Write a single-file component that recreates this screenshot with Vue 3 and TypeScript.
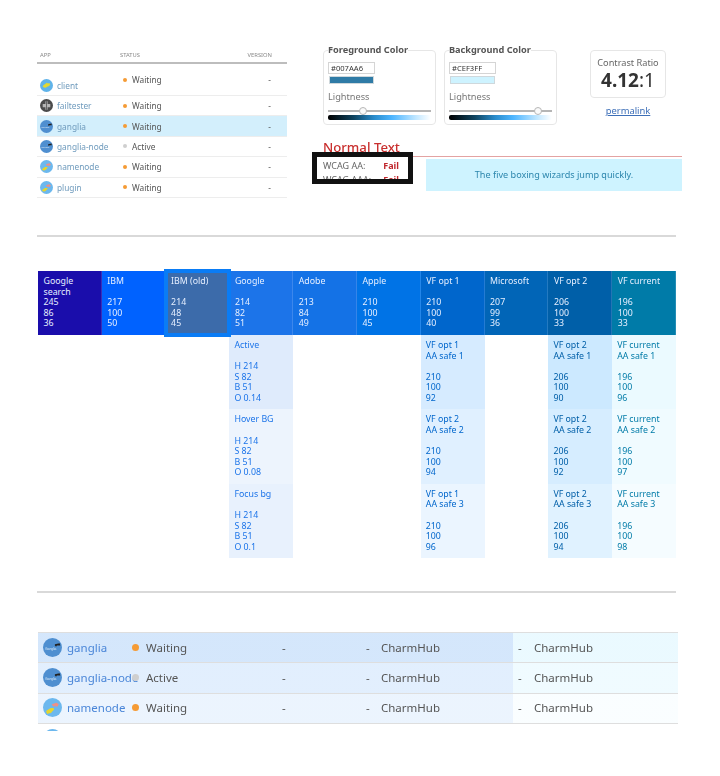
<script setup lang="ts">
type AppRow = { name: string; icon: string; status: string; selected?: boolean }

const apps: AppRow[] = [
  { name: "client", icon: "client", status: "Waiting" },
  { name: "failtester", icon: "fail", status: "Waiting" },
  { name: "ganglia", icon: "ganglia", status: "Waiting", selected: true },
  { name: "ganglia-node", icon: "ganglia", status: "Active" },
  { name: "namenode", icon: "node", status: "Waiting" },
  { name: "plugin", icon: "node", status: "Waiting" },
]

const pickers = [
  { title: "Foreground Color", hex: "#007AA6", swatch: "#2f7ba6", thumb: 34 },
  { title: "Background Color", hex: "#CEF3FF", swatch: "#cef3ff", thumb: 86 },
]

type Shade = { lines: string[]; values: string[]; bg: string }
type Brand = { title: string[]; h: number; s: number; l: number; focus?: boolean; shades?: Shade[] }

function hslShades(names: string[], h: number, lights: number[]): Shade[] {
  return lights.map((l, i) => ({
    lines: [names[i], "AA safe " + (i + 1), ""],
    values: [String(h), "100", String(l)],
    bg: `hsl(${h}, 100%, ${l}%)`,
  }))
}

const googleShades: Shade[] = [
  { lines: ["Active", ""], values: ["H 214", "S 82", "B 51", "O 0.14"], bg: "hsla(214, 82%, 51%, 0.14)" },
  { lines: ["Hover BG", ""], values: ["H 214", "S 82", "B 51", "O 0.08"], bg: "hsla(214, 82%, 51%, 0.08)" },
  { lines: ["Focus bg", ""], values: ["H 214", "S 82", "B 51", "O 0.1"], bg: "hsla(214, 82%, 51%, 0.1)" },
]

const brands: Brand[] = [
  { title: ["Google", "search"], h: 245, s: 86, l: 36 },
  { title: ["IBM"], h: 217, s: 100, l: 50 },
  { title: ["IBM (old)"], h: 214, s: 48, l: 45, focus: true },
  { title: ["Google"], h: 214, s: 82, l: 51, shades: googleShades },
  { title: ["Adobe"], h: 213, s: 84, l: 49 },
  { title: ["Apple"], h: 210, s: 100, l: 45 },
  { title: ["VF opt 1"], h: 210, s: 100, l: 40, shades: hslShades(["VF opt 1", "VF opt 2", "VF opt 1"], 210, [92, 94, 96]) },
  { title: ["Microsoft"], h: 207, s: 99, l: 36 },
  { title: ["VF opt 2"], h: 206, s: 100, l: 33, shades: hslShades(["VF opt 2", "VF opt 2", "VF opt 2"], 206, [90, 92, 94]) },
  { title: ["VF current"], h: 196, s: 100, l: 33, shades: hslShades(["VF current", "VF current", "VF current"], 196, [96, 97, 98]) },
]

function color(b: Brand) {
  return `hsl(${b.h}, ${b.s}%, ${b.l}%)`
}

const deployed = [
  { name: "ganglia", icon: "ganglia", status: "Waiting", left: "hsl(212, 85%, 91%)", right: "hsl(196, 100%, 96%)" },
  { name: "ganglia-node", icon: "ganglia", status: "Active", left: "hsl(212, 90%, 94%)", right: "hsl(196, 100%, 97%)" },
  { name: "namenode", icon: "node", status: "Waiting", left: "hsl(212, 90%, 96%)", right: "hsl(196, 100%, 99%)" },
]
</script>

<template>
  <main class="page">
    <svg class="defs" aria-hidden="true">
      <symbol id="client" viewBox="0 0 24 24">
        <circle cx="12" cy="12" r="12" fill="#5fb3ea" />
        <path d="M5 14c1-4 5-4 7-7 2 2 5 0 7 2-1 3-2 4-5 5-2 1-3 3-5 2-2 0-3-1-4-2z" fill="#e3d832" />
      </symbol>
      <symbol id="fail" viewBox="0 0 24 24">
        <circle cx="12" cy="12" r="12" fill="#4b4b4b" />
        <path d="M10 4h4v5h5v6h-5v5h-4v-5H5V9h5z" fill="#b5b5b5" />
        <path d="M12 4v16" stroke="#4b4b4b" stroke-width="1.4" />
      </symbol>
      <symbol id="ganglia" viewBox="0 0 24 24">
        <circle cx="12" cy="12" r="12" fill="#4f8fd0" />
        <path d="M15 8l6-1.5 1 3-4.5 0-1 1.5-1.5-1.5z" fill="#222" />
      </symbol>
      <symbol id="node" viewBox="0 0 24 24">
        <circle cx="12" cy="12" r="12" fill="#6cb8ee" />
        <path d="M4 18c0-3 3-3 5-5 2 0 5-1 5 1 0 2-2 2-3 4-2 2-6 2-7 0z" fill="#e5d52e" />
        <path d="M11 8l6-2 3 2-2 3-3-1-2 1z" fill="#ee8f86" />
      </symbol>
    </svg>

    <section class="top">
      <div class="apps">
        <div class="apps-head">
          <span class="col-app">APP</span>
          <span class="col-status">STATUS</span>
          <span class="col-version">VERSION</span>
        </div>
        <div
          v-for="(a, i) in apps"
          :key="a.name"
          class="apps-row"
          :class="{ selected: a.selected, first: i === 0 }"
        >
          <span class="col-app app-name">
            <svg class="icon" viewBox="0 0 24 24">
              <use :href="'#' + a.icon" />
              <text v-if="a.icon === 'ganglia'" x="2.5" y="15" class="logo-text">Ganglia</text>
            </svg>
            {{ a.name }}
          </span>
          <span class="col-status status-cell">
            <i class="dot" :class="a.status === 'Active' ? 'grey' : 'orange'"></i>
            {{ a.status }}
          </span>
          <span class="col-version">-</span>
        </div>
      </div>

      <div class="checker">
        <div class="picker-row">
          <div v-for="p in pickers" :key="p.title" class="picker">
            <div class="legend">{{ p.title }}</div>
            <div class="hex">{{ p.hex }}</div>
            <div class="swatch" :style="{ background: p.swatch }"></div>
            <div class="light-label">Lightness</div>
            <div class="slider">
              <span class="thumb" :style="{ left: p.thumb + '%' }"></span>
            </div>
            <div class="ramp"></div>
          </div>
          <div class="ratio-wrap">
            <div class="ratio">
              <div class="ratio-label">Contrast Ratio</div>
              <div class="ratio-value"><b>4.12</b>:1</div>
            </div>
            <a class="permalink" href="#">permalink</a>
          </div>
        </div>

        <div class="normal">
          <h2>Normal Text</h2>
          <div class="normal-body">
            <div class="levels">
              <div class="level">WCAG AA: <b>Fail</b></div>
              <div class="level">WCAG AAA: <b>Fail</b></div>
              <div class="frame"></div>
            </div>
            <div class="preview">The five boxing wizards jump quickly.</div>
          </div>
        </div>
      </div>
    </section>

    <hr class="rule" />

    <section class="colors">
      <div v-for="b in brands" :key="b.title.join()" class="brand">
        <div class="brand-head" :class="{ focus: b.focus }" :style="{ background: color(b) }">
          <div class="title">
            <div v-for="t in b.title" :key="t">{{ t }}</div>
          </div>
          <div>{{ b.h }}</div>
          <div>{{ b.s }}</div>
          <div>{{ b.l }}</div>
        </div>
        <div
          v-for="s in b.shades"
          :key="s.bg"
          class="shade"
          :style="{ background: s.bg, color: color(b) }"
        >
          <div v-for="(t, i) in s.lines" :key="i" class="line">{{ t }}</div>
          <div v-for="v in s.values" :key="v">{{ v }}</div>
        </div>
      </div>
    </section>

    <hr class="rule rule-two" />

    <section class="deployed">
      <div
        v-for="d in deployed"
        :key="d.name"
        class="dep-row"
        :style="{ background: `linear-gradient(90deg, ${d.left} 475px, ${d.right} 475px)` }"
      >
        <svg class="dep-icon" viewBox="0 0 24 24">
          <use :href="'#' + d.icon" />
          <text v-if="d.icon === 'ganglia'" x="2.5" y="15" class="logo-text">Ganglia</text>
        </svg>
        <span class="dep-name">{{ d.name }}</span>
        <i class="dep-dot" :class="d.status === 'Active' ? 'grey' : 'orange'"></i>
        <span>{{ d.status }}</span>
        <span>-</span>
        <span>-</span>
        <span>CharmHub</span>
        <span>-</span>
        <span>CharmHub</span>
      </div>
      <div class="dep-row next">
        <svg class="dep-icon" viewBox="0 0 24 24"><use href="#node" /></svg>
      </div>
    </section>
  </main>
</template>

<style scoped>
.page {
  width: 720px;
  height: 776px;
  overflow: hidden;
  font-family: "Noto Sans", "Open Sans", sans-serif;
  color: #444;
  filter: blur(0.35px);
}

.defs {
  position: absolute;
  width: 0;
  height: 0;
}

.logo-text {
  font-size: 4.2px;
  fill: #dbe9f6;
  font-family: "Liberation Sans", sans-serif;
}

.top {
  display: flex;
  padding: 47px 38px 0 37px;
  height: 235px;
  box-sizing: border-box;
}

.apps {
  width: 250px;
  margin-right: 36px;
  font-size: 8.3px;
}

.apps-head {
  display: flex;
  height: 17px;
  align-items: center;
  border-bottom: 2px solid #bdbdbd;
  box-sizing: border-box;
  font-size: 5.8px;
  color: #888;
}

.col-app {
  width: 83px;
  padding-left: 3px;
  box-sizing: border-box;
}

.col-status {
  width: 125px;
  flex: none;
}

.col-version {
  flex: 1;
  text-align: right;
  padding-right: 16px;
}

.apps-head .col-version {
  padding-right: 15px;
}

.apps-row {
  display: flex;
  align-items: center;
  height: 20.4px;
  border-bottom: 1px solid #ededed;
  box-sizing: border-box;
  color: #555;
}

.apps-row.first {
  height: 32px;
  align-items: flex-end;
  padding-bottom: 3px;
}

.apps-row.first .status-cell,
.apps-row.first .col-version {
  align-self: flex-start;
  padding-top: 10px;
}

.apps-row.selected {
  background: #d3effc;
}

.app-name {
  display: flex;
  align-items: center;
  gap: 4px;
  color: #6f9bbd;
}

.icon {
  width: 13px;
  height: 13px;
  flex: none;
}

.status-cell {
  display: flex;
  align-items: center;
  padding-left: 3px;
  box-sizing: border-box;
}

.dot {
  width: 4px;
  height: 4px;
  border-radius: 50%;
  margin-right: 5px;
}

.orange {
  background: #f59b35;
}

.grey {
  background: #cfcfcf;
}

.checker {
  width: 359px;
  margin-top: 3px;
}

.picker-row {
  display: flex;
  align-items: flex-start;
}

.picker {
  flex: none;
  width: 113px;
  height: 75px;
  margin-right: 8px;
  padding: 0 4px;
  border: 1px solid #e6e6e6;
  border-radius: 4px;
  box-sizing: border-box;
  position: relative;
}

.legend {
  position: absolute;
  top: -7px;
  left: 4px;
  font-size: 9.2px;
  font-weight: 700;
  line-height: 12px;
  color: #555;
  background: #fff;
  white-space: nowrap;
}

.hex {
  margin-top: 11px;
  width: 47px;
  height: 12px;
  border: 1px solid #d5d5d5;
  box-sizing: border-box;
  font-size: 7.6px;
  line-height: 10px;
  padding-left: 2px;
  color: #333;
}

.swatch {
  width: 45px;
  height: 8px;
  margin-top: 2px;
  margin-left: 1px;
  border: 1px solid #cfd8dc;
  box-sizing: border-box;
}

.light-label {
  font-size: 9.2px;
  line-height: 12px;
  margin-top: 7px;
  color: #777;
}

.slider {
  position: relative;
  height: 2px;
  margin-top: 6.5px;
  background: #b5b5b5;
  width: 103px;
}

.thumb {
  position: absolute;
  top: -3px;
  width: 8px;
  height: 8px;
  margin-left: -4px;
  border-radius: 50%;
  background: #fafafa;
  border: 1px solid #b5b5b5;
  box-sizing: border-box;
}

.ramp {
  width: 103px;
  height: 5px;
  margin-top: 3.5px;
  border-radius: 2px;
  background: linear-gradient(90deg, #000 0%, #0f4460 25%, #2a8ccc 45%, #4db5ff 62%, #bfe6ff 85%, #fff 100%);
}

.ratio-wrap {
  flex: none;
  width: 76px;
  margin-left: 25px;
  text-align: center;
}

.ratio {
  height: 48px;
  border: 1px solid #e6e6e6;
  border-radius: 4px;
  box-sizing: border-box;
  padding-top: 6px;
}

.ratio-label {
  font-size: 9.2px;
  line-height: 12px;
  color: #666;
}

.ratio-value {
  font-size: 19px;
  line-height: 22px;
  color: #333;
}

.permalink {
  display: block;
  margin-top: 6px;
  font-size: 9.4px;
  color: #3d6fb8;
}

.normal {
  width: 359px;
}

.normal h2 {
  margin: 14px 0 0;
  font-size: 13.2px;
  line-height: 17px;
  font-weight: 500;
  color: #c9302f;
  border-bottom: 1px solid #e3a3a3;
}

.normal-body {
  display: flex;
}

.levels {
  position: relative;
  width: 101px;
  height: 32px;
  margin-left: -11px;
  margin-top: -5px;
  padding: 7px 14px 0 11px;
  box-sizing: border-box;
  background: #fff;
  font-size: 9px;
  line-height: 14px;
  color: #666;
  overflow: hidden;
}

.level {
  display: flex;
  justify-content: space-between;
  white-space: nowrap;
}

.level b {
  color: #c0272d;
}

.frame {
  position: absolute;
  inset: 0;
  border: 5px solid #111;
}

.preview {
  width: 256px;
  height: 32px;
  margin: 2px 0 0 13px;
  background: #cef3ff;
  color: #2c86ad;
  font-size: 9.1px;
  line-height: 32px;
  text-align: center;
}

.rule {
  border: 0;
  height: 2px;
  background: #d9d9d9;
  margin: 0 44px 0 37px;
}

.rule-two {
  margin-top: 33px;
}

.colors {
  display: flex;
  margin: 34px 44px 0 38px;
  height: 287px;
  font-size: 8.8px;
  line-height: 10.6px;
}

.brand {
  flex: 1;
  min-width: 0;
}

.brand-head {
  height: 64px;
  padding: 5px 5px 0 5.5px;
  box-sizing: border-box;
  color: #e6efff;
  position: relative;
  box-shadow: inset -1px 0 rgba(255, 255, 255, 0.14);
}

.brand-head.focus {
  outline: 4px solid #0a7cf5;
  outline-offset: -2px;
  z-index: 1;
}

.title {
  height: 21.2px;
}

.shade {
  height: 74.4px;
  padding: 5px 5px 0;
  box-sizing: border-box;
}

.line {
  height: 10.6px;
}

.deployed {
  margin: 39px 42px 0 38px;
  height: 98.5px;
  overflow: hidden;
  font-size: 11.5px;
}

.dep-row {
  display: grid;
  grid-template-columns: 24px 64.5px 14.5px 136px 84px 15px 137px 16px 1fr;
  align-items: center;
  height: 30.4px;
  border-top: 1px solid #dedede;
  box-sizing: border-box;
  padding: 0 0 1px 5px;
  color: #555;
}

.dep-row.next {
  background: #fff;
  align-items: start;
}

.dep-row.next .dep-icon {
  margin-top: 4.5px;
}

.dep-icon {
  width: 19px;
  height: 19px;
}

.dep-name {
  color: #4a86d8;
  white-space: nowrap;
}

.dep-dot {
  width: 7px;
  height: 7px;
  border-radius: 50%;
  position: relative;
  z-index: 1;
}
</style>

<style>
html, body {
  background: #fff;
}
</style>
